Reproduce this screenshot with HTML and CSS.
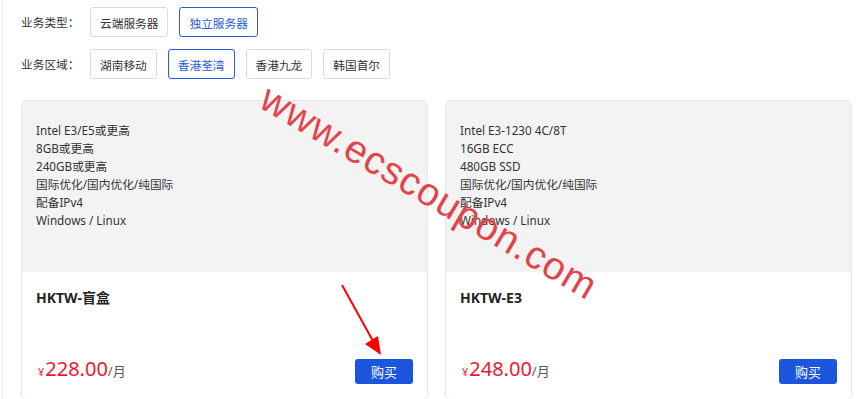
FILE: index.html
```html
<!DOCTYPE html>
<html lang="zh-CN">
<head>
<meta charset="utf-8">
<title>服务器</title>
<link rel="stylesheet" href="styles.css">
</head>
<body>
<div class="page">
  <div class="filters">
    <div class="filter-row">
      <span class="filter-label">业务类型：</span>
      <div class="options">
        <span class="opt">云端服务器</span>
        <span class="opt active">独立服务器</span>
      </div>
    </div>
    <div class="filter-row">
      <span class="filter-label">业务区域：</span>
      <div class="options">
        <span class="opt">湖南移动</span>
        <span class="opt active">香港荃湾</span>
        <span class="opt">香港九龙</span>
        <span class="opt">韩国首尔</span>
      </div>
    </div>
  </div>
  <div class="cards">
    <div class="card">
      <div class="specs">
        <div>Intel E3/E5或更高</div>
        <div>8GB或更高</div>
        <div>240GB或更高</div>
        <div>国际优化/国内优化/纯国际</div>
        <div>配备IPv4</div>
        <div>Windows / Linux</div>
      </div>
      <div class="card-foot">
        <div class="title">HKTW-盲盒</div>
        <div class="price-row">
          <div class="price"><span class="yen">¥</span><span class="amount">228.00</span><span class="unit">/月</span></div>
          <span class="buy">购买</span>
        </div>
      </div>
    </div>
    <div class="card">
      <div class="specs">
        <div>Intel E3-1230 4C/8T</div>
        <div>16GB ECC</div>
        <div>480GB SSD</div>
        <div>国际优化/国内优化/纯国际</div>
        <div>配备IPv4</div>
        <div>Windows / Linux</div>
      </div>
      <div class="card-foot">
        <div class="title">HKTW-E3</div>
        <div class="price-row">
          <div class="price"><span class="yen">¥</span><span class="amount">248.00</span><span class="unit">/月</span></div>
          <span class="buy">购买</span>
        </div>
      </div>
    </div>
  </div>
  <div class="watermark">www.ecscoupon.com</div>
  <svg class="arrow" width="856" height="399" viewBox="0 0 856 399">
    <line x1="342" y1="285" x2="373" y2="341" stroke="#ff0000" stroke-width="2"/>
    <polygon points="381,355 365,344 378,336" fill="#ff0000"/>
  </svg>
</div>
</body>
</html>
```

FILE: styles.css
```css
html, body {
  margin: 0;
  padding: 0;
  background: #ffffff;
}
body {
  font-family: "Noto Sans", "Noto Sans CJK SC", sans-serif;
  font-size: 11.7px;
  color: #333333;
  overflow: hidden;
}
.page {
  position: relative;
  margin-left: 2px;
  border-left: 1px solid #ededed;
  padding: 7px 0 0 18px;
  height: 399px;
  box-sizing: border-box;
}
.filters {
  display: flex;
  flex-direction: column;
  gap: 12px;
}
.filter-row {
  display: flex;
  align-items: center;
  height: 30px;
}
.filter-label {
  width: 69px;
  color: #333;
  line-height: 30px;
}
.options {
  display: flex;
  gap: 11px;
}
.opt {
  display: inline-flex;
  align-items: center;
  height: 30px;
  box-sizing: border-box;
  padding: 0 9px;
  border: 1px solid #dcdcdc;
  border-radius: 3px;
  color: #333;
  background: #fff;
}
.opt.active {
  border-color: #2b5bd9;
  color: #2b5bd9;
}
.cards {
  display: grid;
  grid-template-columns: 407px 407px;
  gap: 17px;
  margin-top: 21px;
}
.card {
  border: 1px solid #e6e6e6;
  border-radius: 6px;
  overflow: hidden;
  height: 300px;
  box-sizing: border-box;
  display: flex;
  flex-direction: column;
}
.specs {
  background: #f3f3f3;
  height: 171px;
  box-sizing: border-box;
  padding: 20px 14px 0;
  line-height: 18px;
  color: #333;
}
.card-foot {
  flex: 1;
  display: flex;
  flex-direction: column;
  justify-content: space-between;
  padding: 16px 14px 15px;
  background: #fff;
}
.title {
  font-weight: bold;
  font-size: 14px;
  line-height: 20px;
  color: #222;
}
.price-row {
  display: flex;
  justify-content: space-between;
  align-items: flex-end;
}
.price {
  color: #f0162e;
  line-height: 24px;
}
.yen {
  font-size: 11px;
  margin: 0 1px 0 2px;
}
.amount {
  font-size: 20px;
}
.unit {
  font-size: 13px;
  color: #555;
}
.buy {
  display: inline-flex;
  align-items: center;
  justify-content: center;
  width: 58px;
  height: 25px;
  background: #1b56dc;
  color: #fff;
  border-radius: 3px;
  font-size: 13px;
}
.watermark {
  position: absolute;
  left: 272px;
  top: 76px;
  font-family: "Liberation Sans", sans-serif;
  font-size: 39px;
  letter-spacing: 1px;
  color: #e3434b;
  transform: rotate(30.5deg);
  transform-origin: 0 0;
  white-space: nowrap;
  pointer-events: none;
}
.arrow {
  position: absolute;
  left: -3px;
  top: 0;
  pointer-events: none;
}
```
